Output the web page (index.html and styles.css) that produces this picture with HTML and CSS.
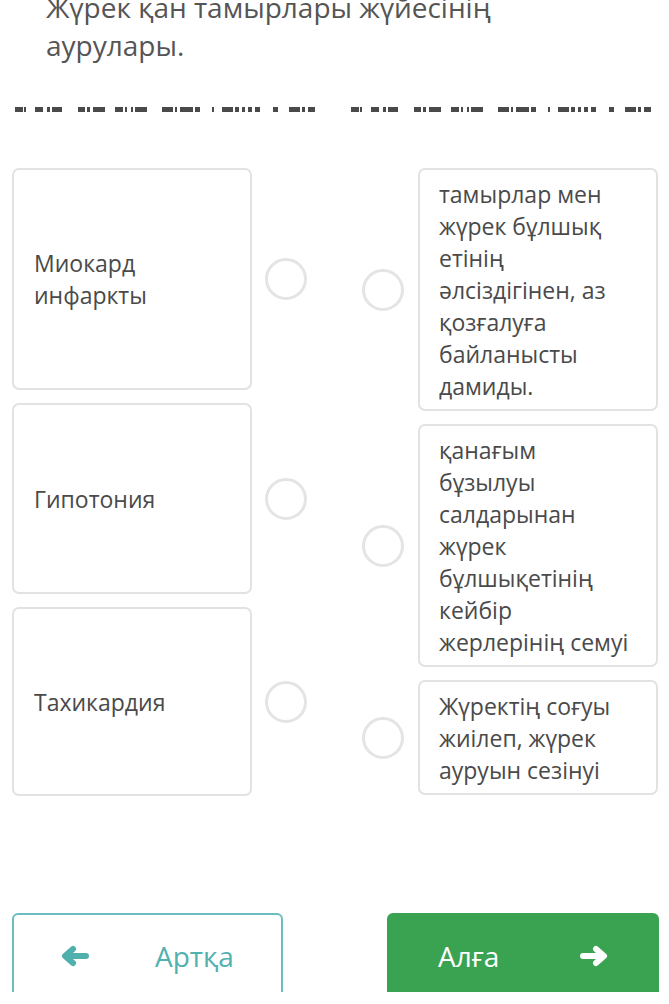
FILE: index.html
```html
<!DOCTYPE html>
<html lang="kk">
<head>
<meta charset="utf-8">
<link rel="stylesheet" href="styles.css">
</head>
<body>
<div class="page">
  <h1 class="title">Жүрек қан тамырлары жүйесінің аурулары.</h1>

  <div class="dashes">
    <svg class="dash-group" width="305" height="5" viewBox="0 0 305 5">
      <g fill="#4a4a4a">
        <rect x="0" y="0" width="8" height="5"/><rect x="9" y="0" width="2" height="5"/>
        <rect x="20" y="0" width="8" height="5"/>
        <rect x="32" y="0" width="3" height="5"/><rect x="37" y="0" width="10" height="5"/>
        <rect x="63" y="0" width="7" height="5"/><rect x="72" y="0" width="3" height="5"/><rect x="78" y="0" width="12" height="5"/>
        <rect x="100" y="0" width="8" height="5"/><rect x="110" y="0" width="2" height="5"/><rect x="116" y="0" width="2" height="5"/><rect x="120" y="0" width="12" height="5"/>
        <rect x="147" y="0" width="11" height="5"/><rect x="160" y="0" width="2" height="5"/><rect x="165" y="0" width="13" height="5"/><rect x="180" y="0" width="5" height="5"/>
        <rect x="197" y="0" width="2" height="5"/>
        <rect x="207" y="0" width="11" height="5"/><rect x="220" y="0" width="4" height="5"/><rect x="227" y="0" width="3" height="5"/><rect x="233" y="0" width="4" height="5"/><rect x="240" y="0" width="5" height="5"/>
        <rect x="258" y="0" width="5" height="5"/>
        <rect x="274" y="0" width="11" height="5"/><rect x="287" y="0" width="3" height="5"/><rect x="293" y="0" width="7" height="5"/>
      </g>
    </svg>
    <svg class="dash-group" width="305" height="5" viewBox="0 0 305 5">
      <g fill="#4a4a4a">
        <rect x="0" y="0" width="8" height="5"/><rect x="9" y="0" width="2" height="5"/>
        <rect x="20" y="0" width="8" height="5"/>
        <rect x="32" y="0" width="3" height="5"/><rect x="37" y="0" width="10" height="5"/>
        <rect x="63" y="0" width="7" height="5"/><rect x="72" y="0" width="3" height="5"/><rect x="78" y="0" width="12" height="5"/>
        <rect x="100" y="0" width="8" height="5"/><rect x="110" y="0" width="2" height="5"/><rect x="116" y="0" width="2" height="5"/><rect x="120" y="0" width="12" height="5"/>
        <rect x="147" y="0" width="11" height="5"/><rect x="160" y="0" width="2" height="5"/><rect x="165" y="0" width="13" height="5"/><rect x="180" y="0" width="5" height="5"/>
        <rect x="197" y="0" width="2" height="5"/>
        <rect x="207" y="0" width="11" height="5"/><rect x="220" y="0" width="4" height="5"/><rect x="227" y="0" width="3" height="5"/><rect x="233" y="0" width="4" height="5"/><rect x="240" y="0" width="5" height="5"/>
        <rect x="258" y="0" width="5" height="5"/>
        <rect x="274" y="0" width="11" height="5"/><rect x="287" y="0" width="3" height="5"/><rect x="293" y="0" width="7" height="5"/>
      </g>
    </svg>
  </div>

  <div class="match">
    <div class="col col-left">
      <div class="row">
        <div class="card card-left card-h1">Миокард инфаркты</div>
        <span class="dot"></span>
      </div>
      <div class="row">
        <div class="card card-left card-h2">Гипотония</div>
        <span class="dot"></span>
      </div>
      <div class="row">
        <div class="card card-left card-h3">Тахикардия</div>
        <span class="dot"></span>
      </div>
    </div>
    <div class="col col-right">
      <div class="row">
        <span class="dot"></span>
        <div class="card card-right">тамырлар мен жүрек бұлшық етінің әлсіздігінен, аз қозғалуға байланысты дамиды.</div>
      </div>
      <div class="row">
        <span class="dot"></span>
        <div class="card card-right">қанағым бұзылуы салдарынан жүрек бұлшықетінің кейбір жерлерінің семуі</div>
      </div>
      <div class="row">
        <span class="dot"></span>
        <div class="card card-right">Жүректің соғуы жиілеп, жүрек ауруын сезінуі</div>
      </div>
    </div>
  </div>

  <div class="nav">
    <button class="btn btn-back">
      <svg class="arrow" width="30" height="22" viewBox="0 0 30 22">
        <path d="M26 11 H6 M13 4 L5 11 L13 18" fill="none" stroke="#4fb0ad" stroke-width="6" stroke-linecap="round" stroke-linejoin="round"/>
      </svg>
      <span class="btn-label">Артқа</span>
    </button>
    <button class="btn btn-next">
      <span class="btn-label">Алға</span>
      <svg class="arrow" width="30" height="22" viewBox="0 0 30 22">
        <path d="M4 11 H24 M17 4 L25 11 L17 18" fill="none" stroke="#ffffff" stroke-width="6" stroke-linecap="round" stroke-linejoin="round"/>
      </svg>
    </button>
  </div>
</div>
</body>
</html>
```

FILE: styles.css
```css
* { box-sizing: border-box; }

html, body {
  margin: 0;
  padding: 0;
  background: #ffffff;
}

body {
  font-family: "Open Sans", "Noto Sans", sans-serif;
  color: #4d4d4d;
  overflow: hidden;
}

.page {
  width: 669px;
  height: 1004px;
  padding: 0 10px 0 12px;
}

.title {
  margin: -12px 0 0 0;
  padding: 0 60px 0 34px;
  font-size: 28px;
  font-weight: 400;
  line-height: 38px;
  color: #555555;
}

.dashes {
  display: flex;
  justify-content: space-between;
  margin: 43px 0 0 3px;
  height: 5px;
  padding-right: 3px;
}

.dash-group { display: block; }

.match {
  display: flex;
  justify-content: space-between;
  margin-top: 56px;
  padding-right: 1px;
}

.col {
  display: flex;
  flex-direction: column;
  gap: 13px;
}

.col-left { width: 296px; }
.col-right { width: 296px; }

.row {
  display: flex;
  align-items: center;
}

.col-left .row { gap: 13px; }
.col-right .row { gap: 14px; }

.card {
  flex: none;
  width: 240px;
  border: 2px solid #e2e2e2;
  border-radius: 7px;
  background: #ffffff;
  font-size: 23px;
  line-height: 32px;
  color: #4a4a4a;
}

.card-left {
  display: flex;
  align-items: center;
  padding: 0 40px 0 20px;
}

.card-h1 { height: 222px; }
.card-h2 { height: 191px; }
.card-h3 { height: 189px; }

.card-right {
  padding: 8px 22px 7px 19px;
}

.dot {
  flex: none;
  width: 42px;
  height: 42px;
  border: 3px solid #e3e4e6;
  border-radius: 50%;
}

.nav {
  display: flex;
  justify-content: space-between;
  margin-top: 117px;
}

.btn {
  display: flex;
  align-items: center;
  height: 85px;
  border-radius: 6px;
  font-family: "Open Sans", "Noto Sans", sans-serif;
  font-size: 28px;
  padding: 0;
  cursor: pointer;
}

.btn-back {
  width: 271px;
  background: #ffffff;
  border: 2px solid #6dbcc0;
  color: #52b1ae;
  padding-left: 46px;
  gap: 65px;
}

.btn-next {
  width: 272px;
  background: #3aa352;
  border: none;
  color: #ffffff;
  padding-left: 51px;
  gap: 80px;
}

.arrow { display: block; flex: none; }
.btn-label { display: block; }
```
